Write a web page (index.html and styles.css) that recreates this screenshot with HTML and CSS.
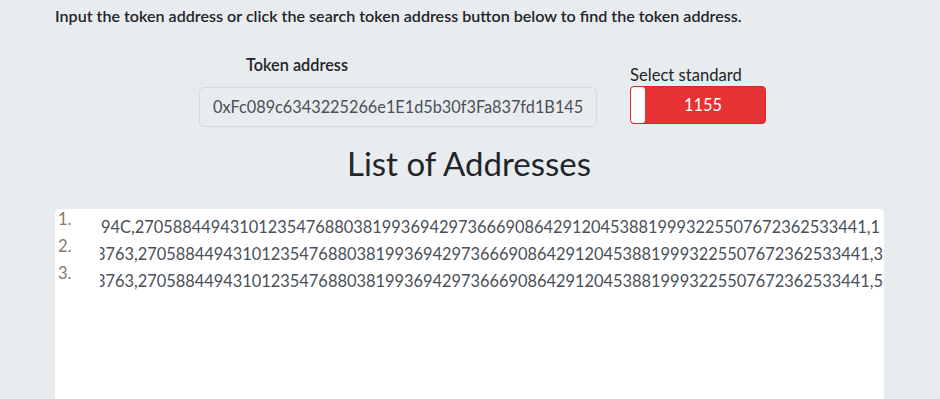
FILE: index.html
```html
<!DOCTYPE html>
<html lang="en">
<head>
<meta charset="utf-8">
<title>Token addresses</title>
<link rel="stylesheet" href="styles.css">
</head>
<body>
<main class="page">
  <p class="intro">Input the token address or click the search token address button below to find the token address.</p>
  <section class="controls">
    <div class="token-group">
      <div class="token-label">Token address</div>
      <div class="token-input">0xFc089c6343225266e1E1d5b30f3Fa837fd1B145</div>
    </div>
    <div class="select-group">
      <div class="select-label">Select standard</div>
      <div class="toggle"><span class="knob"></span><span class="toggle-text">1155</span></div>
    </div>
  </section>
  <h2 class="heading">List of Addresses</h2>
  <section class="list-box">
    <div class="row"><span class="num">1.</span><div class="line"><span class="line-text first">94C,27058844943101235476880381993694297366690864291204538819993225507672362533441,1</span></div></div>
    <div class="row"><span class="num">2.</span><div class="line"><span class="line-text">3763,27058844943101235476880381993694297366690864291204538819993225507672362533441,3</span></div></div>
    <div class="row"><span class="num">3.</span><div class="line"><span class="line-text">3763,27058844943101235476880381993694297366690864291204538819993225507672362533441,5</span></div></div>
  </section>
</main>
</body>
</html>
```
FILE: styles.css
```css
* { box-sizing: border-box; }
html, body { margin: 0; padding: 0; }
body {
  background: #e9ecef;
  font-family: Lato, "Open Sans", sans-serif;
  color: #212529;
  height: 399px;
  overflow: hidden;
}
.page { padding: 0 56px 0 55px; }
.intro {
  margin: 0;
  padding-top: 6px;
  font-size: 16.1px;
  font-weight: 600;
  line-height: 20px;
}
.controls {
  display: flex;
  align-items: flex-start;
  margin-top: 29px;
  padding-left: 144px;
  gap: 33px;
}
.token-label {
  padding-left: 47px;
  font-size: 16.3px;
  font-weight: 600;
  line-height: 20px;
  margin-bottom: 12px;
}
.token-input {
  width: 398px;
  height: 40px;
  border: 1px solid #d6dadf;
  border-radius: 5px;
  background: #e9ecef;
  padding: 0 13px;
  font-size: 16.3px;
  line-height: 38px;
  color: #495057;
  white-space: nowrap;
}
.select-group { margin-top: 10px; }
.select-label {
  font-size: 16.6px;
  line-height: 20px;
  margin-bottom: 1px;
  color: #212529;
}
.toggle {
  display: flex;
  align-items: stretch;
  width: 136px;
  height: 38px;
  background: #e63232;
  border: 1px solid #d42a2a;
  border-radius: 4px;
  overflow: hidden;
}
.knob {
  width: 14px;
  background: #ffffff;
  border-radius: 3px;
}
.toggle-text {
  flex: 1;
  text-align: center;
  color: #ffffff;
  font-size: 16.4px;
  line-height: 36px;
  padding-right: 4px;
}
.heading {
  margin: 17px 0 0;
  text-align: center;
  font-size: 33px;
  font-weight: 400;
  line-height: 38px;
  color: #212529;
  padding-right: 1px;
}
.list-box {
  margin-top: 27px;
  width: 829px;
  height: 200px;
  background: #ffffff;
  border-radius: 4px 4px 0 0;
  padding-top: 4px;
}
.row {
  display: flex;
  align-items: flex-start;
}
.num {
  width: 45px;
  padding-left: 3px;
  font-size: 16.5px;
  line-height: 13px;
  color: #857a69;
}
.line {
  flex: 1;
  overflow: hidden;
  height: 27px;
}
.line-text {
  display: block;
  white-space: nowrap;
  font-size: 16.4px;
  line-height: 27px;
  color: #495057;
  margin-left: -4px;
}
.line-text.first { margin-left: 1px; }
```
